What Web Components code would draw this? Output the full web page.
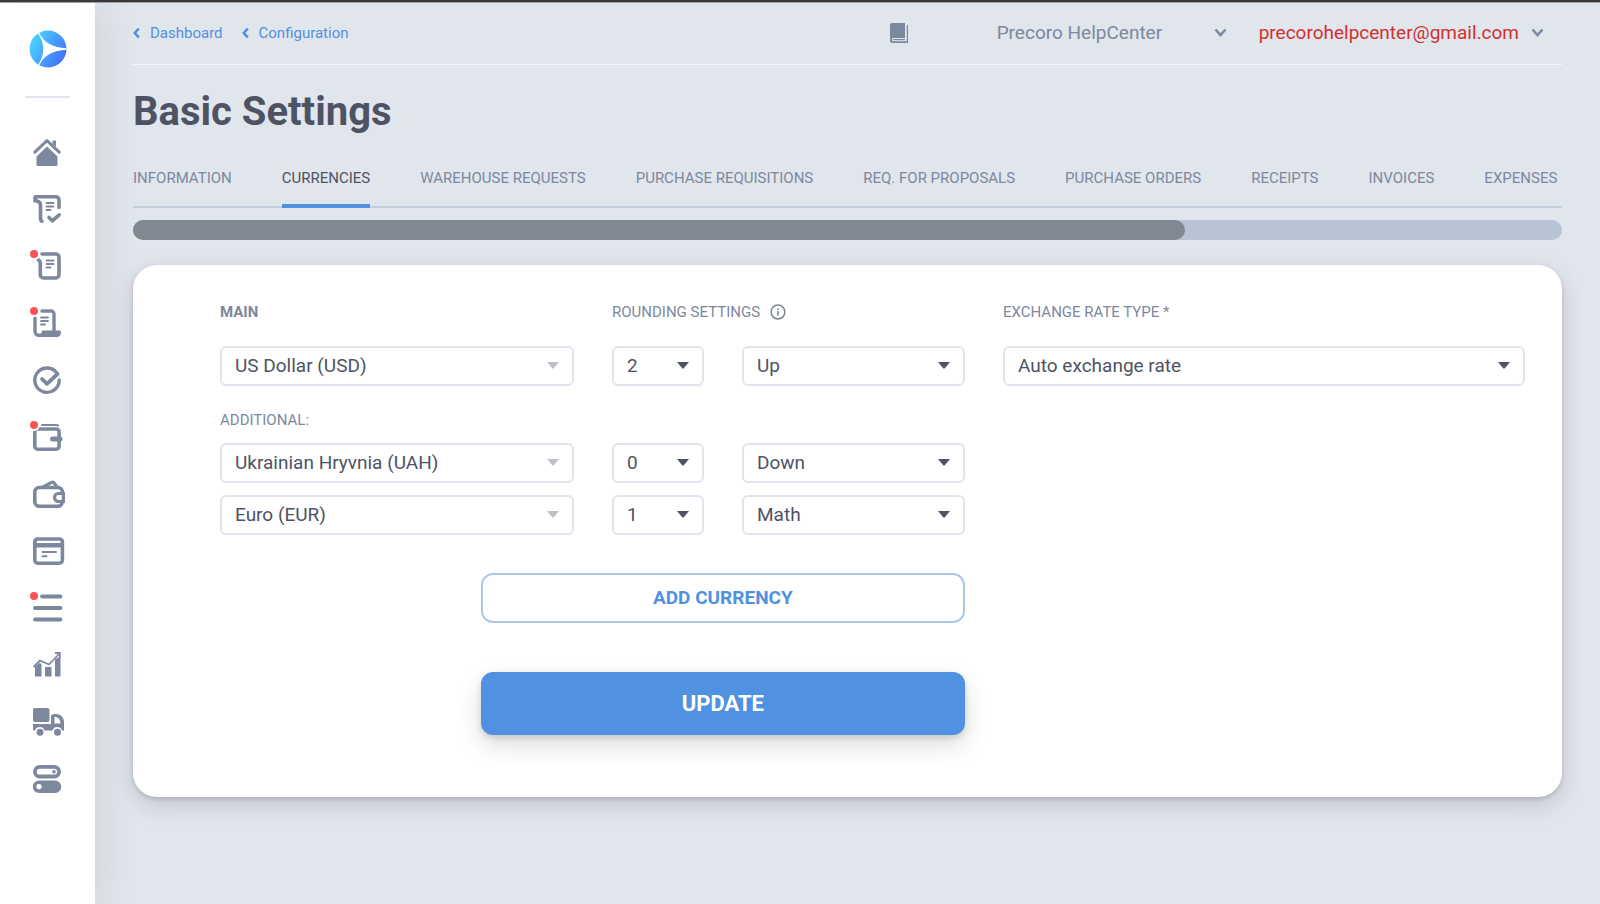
<!DOCTYPE html>
<html lang="en">
<head>
<meta charset="utf-8">
<meta name="viewport" content="width=device-width, initial-scale=1">
<title>Basic Settings</title>
<style>
  :root {
    --ink: #4e5364;
    --muted: #7d889e;
    --blue: #5091e2;
    --line: #e0e5ed;
    --page: #e1e5ec;
  }
  html, body { height: 100%; }
  body { margin: 0; background: var(--page); color: var(--ink); font-family: Roboto, "Liberation Sans", sans-serif; font-size: 19px; }
</style>
</head>
<body>
<pr-app>
  <pr-sidebar slot="side"></pr-sidebar>
  <pr-topbar></pr-topbar>
  <pr-heading>Basic Settings</pr-heading>
  <pr-tabs active="CURRENCIES"></pr-tabs>
  <pr-card><pr-currencies></pr-currencies></pr-card>
</pr-app>

<script>
const define = (name, html, setup) => customElements.define(name, class extends HTMLElement {
  connectedCallback() {
    if (this.shadowRoot) return;
    const t = document.createElement('template');
    t.innerHTML = typeof html === 'function' ? html(this) : html;
    this.attachShadow({ mode: 'open' }).append(t.content.cloneNode(true));
    if (setup) setup(this, this.shadowRoot);
  }
});

/* Line-style drawings on a 28 x 28 box; wider ones run past the right edge. */
const S = 'fill="none" stroke="currentColor" stroke-linecap="round" stroke-linejoin="round"';
const ICONS = {
  home: `<path ${S} stroke-width="3" d="M1.800 14.200 14 2.600 26.200 14.200"/><path fill="currentColor" d="M19.500 2.500h3.500v6.500l-3.500-3.300zM14 8.500 24.500 18.500V26.500a1.500 1.500 0 0 1-1.500 1.500H5a1.500 1.500 0 0 1-1.500-1.500V18.500z"/>`,
  approve: `<path ${S} stroke-width="3.600" d="M26 12.500V4.800a3 3 0 0 0-3-3H2.500c-1 2 0 4 2 4.500C7 7 7.500 8 7.500 10v13c0 2 .4 2.800 1.500 3.200M2 2.500v3.500"/><path ${S} stroke-width="1.800" d="M13.500 8h7M13.500 11.500h7M13.500 15h4"/><path ${S} stroke-width="3.600" d="M16 22.500 19.300 25.800 26.200 19.800"/>`,
  request: `<path ${S} stroke-width="3.600" d="M9 2h13.800A3.200 3.200 0 0 1 26 5.200v17.600A3.200 3.200 0 0 1 22.800 26H10.500a3.200 3.200 0 0 1-3.200-3.200V11c0-1.500-.5-2.500-1.800-3.200"/><path ${S} stroke-width="1.800" d="M13.500 8.500h7M13.500 12h7M13.500 15.500h4"/>`,
  order: `<path ${S} stroke-width="3.400" d="M9 2h9a3 3 0 0 1 3 3v17M2 9v13.500a4 4 0 0 0 4 3.800h4"/><path fill="currentColor" d="M9 21.500h17.500a1.500 1.500 0 0 1 1.500 1.500c0 3-1.500 5-4 5H6v-2.500c2.500 0 3-2 3-4z"/><path ${S} stroke-width="1.800" d="M8 8.500h7M8 12h7M8 15.500h4"/>`,
  check: `<path ${S} stroke-width="3.400" d="M23.500 6.500A12.200 12.200 0 1 0 26.200 14"/><path ${S} stroke-width="3.800" d="M9 13 14 17.800 24.500 8"/>`,
  wallet: `<rect ${S} stroke-width="3.600" x="1.800" y="6" width="24.300" height="20.200" rx="3"/><path ${S} stroke-width="2" d="M9 2h15a1.500 1.500 0 0 1 1 .6"/><path ${S} stroke-width="5" d="M19.500 16h7.500"/>`,
  purse: `<rect ${S} stroke-width="3.600" x="1.800" y="7.500" width="27.500" height="18.700" rx="4.500"/><path ${S} stroke-width="3.200" d="M10 7 18.500 2.300a2 2 0 0 1 2.400.4L24 7"/><path fill="#fff" stroke="currentColor" stroke-width="3.200" d="M30.400 13.500H25.500a4 4 0 0 0 0 8h4.900z"/>`,
  invoice: `<rect ${S} stroke-width="3.600" x="1.800" y="2" width="27.600" height="24.200" rx="3"/><path fill="currentColor" d="M1 6h29v4.500H1z"/><path ${S} stroke-width="2" d="M9.500 15h13.500M9.500 19.200h4"/>`,
  list: `<path ${S} stroke-width="3.800" d="M9 2.500h18.500M2 14h25.500M2 25.500h25.500"/>`,
  chart: `<path fill="currentColor" d="M2 15.500 6.500 12 8.500 13v12.500H2zM12 16h6.500v9.500H12zM22 8.500 27.500 5v20.500H22z"/><path fill="none" stroke="currentColor" stroke-width="1.800" d="M.5 16 7 9.500 16 13.500 26 3M22 2h4.800v4.500"/>`,
  truck: `<rect fill="currentColor" x="0" y="0" width="16.500" height="14" rx="2"/><path fill="currentColor" fill-rule="evenodd" d="M0 16h18V9a3 3 0 0 1 3-3h2c5 0 8 4 8 8v8.500h-2a5 5 0 0 0-9.500 0H11.500a5 5 0 0 0-9.500 0H0zM21.500 9v6.500h6c-.3-4-2-6.500-6-6.500z"/><circle fill="currentColor" cx="7" cy="24.300" r="3.500"/><circle fill="currentColor" cx="24.500" cy="24.300" r="3.500"/>`,
  toggles: `<rect ${S} stroke-width="3.800" x="1.900" y="1.800" width="24.200" height="9.700" rx="4.850"/><circle fill="currentColor" cx="21" cy="6.700" r="1.800"/><path fill="currentColor" fill-rule="evenodd" d="M6 15.500h16a6 6 0 0 1 0 12.500H6a6 6 0 0 1 0-12.500zm0 3.500a2.700 2.700 0 1 0 .01 0z"/>`
};

define('pr-app', `
  <style>
    :host { display: flex; flex-direction: column; min-height: 100%; overflow: hidden; }
    .rim { height: 2px; background: #393737; border-bottom: 1px solid #a3a3a6; }
    .row { display: flex; flex: 1; }
    main { flex: 1; min-width: 0; padding: 0 38px 38px; }
  </style>
  <div class="rim"></div>
  <div class="row"><slot name="side"></slot><main><slot></slot></main></div>`);

define('pr-nav-item', el => `
  <style>
    :host { display: block; height: 28px; }
    a { position: relative; display: block; color: var(--muted); width: 28px; height: 28px; }
    svg { display: block; overflow: visible; }
    i { position: absolute; left: -3px; top: -2px; width: 8px; height: 8px; border-radius: 50%; background: #ff5252; box-shadow: 0 0 0 2px #fff; }
  </style>
  <a href="#" aria-label="${el.getAttribute('label')}">
    <svg width="28" height="28" viewBox="0 0 28 28" aria-hidden="true">${ICONS[el.getAttribute('icon')]}</svg>
    ${el.hasAttribute('dot') ? '<i></i>' : ''}
  </a>`);

define('pr-sidebar', `
  <style>
    :host { display: block; width: 95px; flex: none; background: #fff; box-shadow: 0 0 40px rgba(90, 105, 140, .18); }
    .logo { display: block; width: 38px; height: 38px; margin: 27px auto 0; }
    .logo svg { display: block; }
    hr { width: 45px; height: 2px; margin: 28px auto 40px; border: 0; background: #e1e5f0; }
    nav { display: flex; flex-direction: column; align-items: center; gap: 29px; padding-right: 1px; }
  </style>
  <a class="logo" href="#" aria-label="Home">
    <svg width="38" height="38" viewBox="0 0 38 38" aria-hidden="true">
      <defs><linearGradient id="g" x1="0" y1=".2" x2="1" y2=".8"><stop offset="0.150" stop-color="#47cbff"/><stop offset="1" stop-color="#4468fb"/></linearGradient></defs>
      <circle cx="19" cy="19" r="18.500" fill="url(#g)"/>
      <path fill="#fff" d="M10 2.800C15 13 24 17.500 37.500 18.300V19.700C24 20.500 15 25 10.500 35L9.300 34.500C16 24 16 14 9 3.300z"/>
    </svg>
  </a>
  <hr>
  <nav aria-label="Main">
    <pr-nav-item icon="home" label="Home"></pr-nav-item>
    <pr-nav-item icon="approve" label="Warehouse requests"></pr-nav-item>
    <pr-nav-item icon="request" label="Purchase requisitions" dot></pr-nav-item>
    <pr-nav-item icon="order" label="Purchase orders" dot></pr-nav-item>
    <pr-nav-item icon="check" label="Receipts"></pr-nav-item>
    <pr-nav-item icon="wallet" label="Invoices" dot></pr-nav-item>
    <pr-nav-item icon="purse" label="Expenses"></pr-nav-item>
    <pr-nav-item icon="invoice" label="Budgets"></pr-nav-item>
    <pr-nav-item icon="list" label="Catalog" dot></pr-nav-item>
    <pr-nav-item icon="chart" label="Reports"></pr-nav-item>
    <pr-nav-item icon="truck" label="Suppliers"></pr-nav-item>
    <pr-nav-item icon="toggles" label="Configuration"></pr-nav-item>
  </nav>`);

define('pr-crumb', `
  <style>
    :host { display: block; }
    a { display: flex; align-items: center; gap: 10px; color: var(--blue); text-decoration: none; font-size: 15px; line-height: 20px; }
  </style>
  <a href="#"><svg width="7" height="12" viewBox="0 0 7 12" aria-hidden="true"><path d="M5.800 1.500 1.800 6l4 4.500" fill="none" stroke="currentColor" stroke-width="2.600"/></svg><slot></slot></a>`);

define('pr-menu-button', `
  <style>
    :host { display: block; }
    button { display: flex; align-items: center; justify-content: space-between; gap: 12px; width: 100%; padding: 0; border: 0; background: none; color: inherit; font: inherit; line-height: 24px; cursor: pointer; }
    svg { color: var(--muted); }
  </style>
  <button type="button" aria-haspopup="menu"><slot></slot><svg width="13" height="9" viewBox="0 0 13 9" aria-hidden="true"><path d="M1.500 1.500l5 5.500 5-5.500" fill="none" stroke="currentColor" stroke-width="2.600"/></svg></button>`);

define('pr-topbar', `
  <style>
    :host { display: block; }
    header { display: flex; align-items: center; height: 59px; padding: 0 18px 2px 0; border-bottom: 1px solid #f3f5f8; }
    nav { display: flex; gap: 19px; margin-right: auto; }
    .book { margin-right: 89px; color: var(--muted); }
    .book svg { display: block; }
    .org { width: 230px; margin-right: 32px; color: var(--muted); }
    .user { color: #d3302f; }
  </style>
  <header>
    <nav aria-label="Breadcrumb"><pr-crumb>Dashboard</pr-crumb><pr-crumb>Configuration</pr-crumb></nav>
    <a class="book" href="#" aria-label="Help center">
      <svg width="18" height="20" viewBox="0 0 18 20" aria-hidden="true"><path fill="currentColor" d="M2 0h13v15H3q-1 0-1 1v1q0 1.200 1.200 1.200H16.800V2H18v18H2.500Q0 20 0 17.500V2Q0 0 2 0z"/><path fill="currentColor" d="M3 16h12v1.200H3z"/></svg>
    </a>
    <pr-menu-button class="org">Precoro HelpCenter</pr-menu-button>
    <pr-menu-button class="user">precorohelpcenter@gmail.com</pr-menu-button>
  </header>`);

define('pr-heading', `
  <style>
    :host { display: block; }
    h1 { margin: 22px 0 28px; font-size: 40px; line-height: 50px; font-weight: 700; }
  </style>
  <h1><slot></slot></h1>`);

const TABS = ['INFORMATION', 'CURRENCIES', 'WAREHOUSE REQUESTS', 'PURCHASE REQUISITIONS', 'REQ. FOR PROPOSALS', 'PURCHASE ORDERS', 'RECEIPTS', 'INVOICES', 'EXPENSES'];
define('pr-tabs', el => `
  <style>
    :host { display: block; }
    nav { display: flex; gap: 50px; box-shadow: inset 0 -2px #c5ccda; overflow: hidden; }
    a { padding: 3px 0 16px; border-bottom: 4px solid transparent; color: var(--muted); font-size: 15px; line-height: 20px; white-space: nowrap; text-decoration: none; }
    a[aria-current] { color: var(--ink); border-color: var(--blue); }
    .bar { height: 20px; margin-top: 12px; border-radius: 10px; background: #b8c4d6; }
    .thumb { width: 73.6%; height: 100%; border-radius: 10px; background: #808892; }
  </style>
  <nav aria-label="Settings sections">${TABS.map(t => `<a href="#"${t === el.getAttribute('active') ? ' aria-current="page"' : ''}>${t}</a>`).join('')}</nav>
  <div class="bar"><div class="thumb"></div></div>`);

define('pr-card', `
  <style>
    :host { display: block; margin-top: 25px; padding: 37px 37px 62px 87px; border-radius: 24px; background: #fff; box-shadow: 0 2px 4px rgba(0, 0, 0, .14), 0 8px 24px rgba(0, 0, 0, .14); }
  </style>
  <slot></slot>`);

/* Drop-down with an optional caption; the hint attribute adds an info mark. */
define('pr-select', el => {
  const caption = el.getAttribute('caption');
  const options = el.getAttribute('options').split('|');
  return `
  <style>
    :host { display: block; min-width: 0; align-self: end; }
    .caption { display: flex; align-items: center; gap: 10px; margin-bottom: var(--caption-gap, 24px); color: var(--muted); font-size: 15px; line-height: 20px; white-space: nowrap; }
    .caption svg { flex: none; }
    :host([strong]) .caption { font-weight: 700; }
    .box { position: relative; }
    select { display: block; box-sizing: border-box; width: 100%; height: 40px; margin: 0; padding: 0 32px 1px 13px; border: 2px solid var(--line); border-radius: 6px; background: #fff; color: var(--ink); font: inherit; appearance: none; opacity: 1; }
    .arrow { position: absolute; right: 15px; top: 16px; color: var(--ink); pointer-events: none; }
    select:disabled + .arrow { color: #bfc1c8; }
  </style>
  ${caption ? `<div class="caption"><label for="s">${caption}</label>${el.hasAttribute('hint') ? `
    <svg width="16" height="16" viewBox="0 0 16 16" aria-hidden="true"><circle cx="8" cy="8" r="6.900" fill="none" stroke="currentColor" stroke-width="1.500"/><path d="M8 7v4.500M8 4.300v1.600" stroke="currentColor" stroke-width="1.600"/></svg>` : ''}</div>` : ''}
  <div class="box">
    <select id="s"${caption ? '' : ` aria-label="${el.getAttribute('label')}"`}${el.hasAttribute('disabled') ? ' disabled' : ''}>${options.map(o => `<option>${o}</option>`).join('')}</select>
    <svg class="arrow" width="12" height="7" viewBox="0 0 12 7" aria-hidden="true"><path fill="currentColor" d="M0 0h12L6.800 6.300q-.8.900-1.600 0z"/></svg>
  </div>`;
}, (el, root) => { root.querySelector('select').value = el.getAttribute('value'); });

define('pr-button', `
  <style>
    :host { display: block; }
    button { display: block; box-sizing: border-box; width: 100%; height: 50px; padding: 0 0 2px; border: 2px solid #abc8eb; border-radius: 12px; background: #fff; color: var(--blue); font: inherit; font-weight: 700; cursor: pointer; }
    :host([primary]) button { height: 63px; padding: 0; border: 0; background: var(--blue); color: #fff; font-size: 22px; box-shadow: 0 3px 6px rgba(0, 0, 0, .12), 0 10px 24px rgba(0, 0, 0, .14); }
  </style>
  <button type="button"><slot></slot></button>`);

define('pr-currencies', `
  <style>
    :host { display: block; }
    form { display: grid; grid-template-columns: 354fr 92fr 223fr 522fr; gap: 12px 38px; }
    .rate { grid-column: 4; }
    .extra { margin-top: 12px; --caption-gap: 13px; }
    .actions { grid-column: 1 / 4; justify-self: end; width: 65%; display: grid; gap: 49px; margin-top: 26px; }
  </style>
  <form>
    <pr-select caption="MAIN" strong disabled options="US Dollar (USD)" value="US Dollar (USD)"></pr-select>
    <pr-select caption="ROUNDING SETTINGS" hint options="0|1|2|3|4" value="2"></pr-select>
    <pr-select label="USD rounding mode" options="Up|Down|Math" value="Up"></pr-select>
    <pr-select class="rate" caption="EXCHANGE RATE TYPE *" options="Auto exchange rate|Manual exchange rate" value="Auto exchange rate"></pr-select>

    <pr-select class="extra" caption="ADDITIONAL:" disabled options="Ukrainian Hryvnia (UAH)" value="Ukrainian Hryvnia (UAH)"></pr-select>
    <pr-select label="UAH decimals" options="0|1|2|3|4" value="0"></pr-select>
    <pr-select label="UAH rounding mode" options="Up|Down|Math" value="Down"></pr-select>
    <span></span>

    <pr-select label="Additional currency" disabled options="Euro (EUR)" value="Euro (EUR)"></pr-select>
    <pr-select label="EUR decimals" options="0|1|2|3|4" value="1"></pr-select>
    <pr-select label="EUR rounding mode" options="Up|Down|Math" value="Math"></pr-select>

    <div class="actions">
      <pr-button>ADD CURRENCY</pr-button>
      <pr-button primary>UPDATE</pr-button>
    </div>
  </form>`);
</script>
</body>
</html>
